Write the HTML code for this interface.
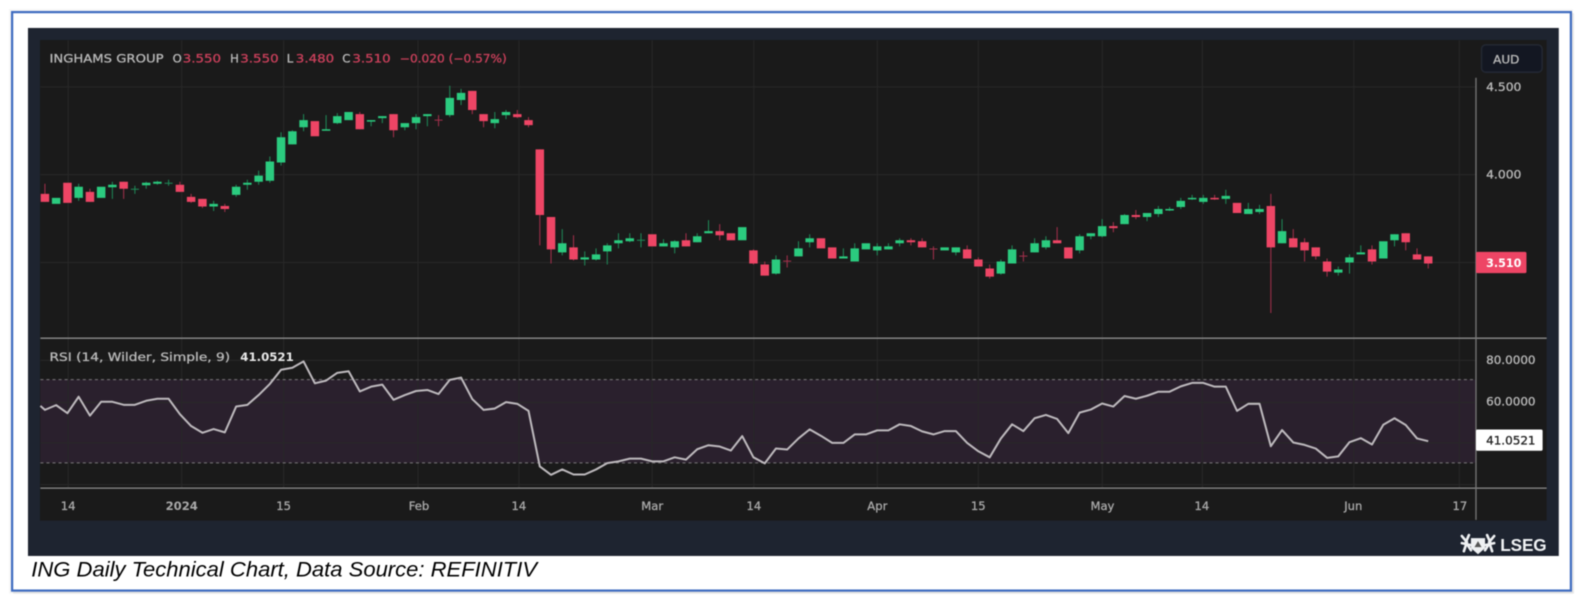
<!DOCTYPE html>
<html><head><meta charset="utf-8"><title>ING Daily Technical Chart</title>
<style>
html,body{margin:0;padding:0;background:#fff;width:1583px;height:603px;overflow:hidden}
svg{display:block;filter:blur(.45px)}
text{font-family:"DejaVu Sans","Liberation Sans",sans-serif}
.t{stroke:currentColor;stroke-width:.3px}
</style></head><body>
<svg width="1583" height="603" viewBox="0 0 1568 597.3" preserveAspectRatio="none" xmlns="http://www.w3.org/2000/svg">
<rect width="1568" height="597.3" fill="#fff"/>
<rect x="13" y="13" width="1546" height="575" fill="#bbb" opacity=".35"/>
<rect x="9" y="9" width="1549" height="579" fill="#ddd" opacity=".3"/>
<rect x="12" y="12" width="1544" height="573" fill="#fff" stroke="#3f6cc0" stroke-width="2.2"/>
<rect x="27.7" y="27.7" width="1516.3" height="523" fill="#1e2430"/>
<rect x="39.6" y="39.6" width="1492.4" height="476.1" fill="#1a1a1a"/>
<rect x="40" y="376" width="1422" height="82.5" fill="#2a202d"/>
<g fill="none" stroke="#282828" stroke-width="1">
<path d="M40 86H1462M40 173H1462M40 260H1462M40 357H1462M40 398.7H1462M40 438.7H1462M40 480H1462"/>
<path d="M67.5 40V484M180 40V484M281 40V484M414 40V484M514 40V484M646 40V484M746.7 40V484M869 40V484M969 40V484M1091.8 40V484M1191 40V484M1341 40V484M1445.5 40V484"/>
</g>
<path d="M40 376H1462M40 458.5H1462" stroke="#7c7a7c" stroke-width="1" stroke-dasharray="3 3" fill="none"/>
<path d="M40 335H1532M40 483.5H1532" stroke="#8c8c8c" stroke-width="1.3" fill="none"/>
<path d="M1462 77V515" stroke="#777" stroke-width="1.3" fill="none"/>

<g transform="translate(.5 0)">
<!-- wicks green -->
<path fill="none" stroke="#1f8a58" stroke-width="1" d="M77.4 182V199M110.8 180V197M133.1 184V192M144.3 180V187M155.4 179V183M166.5 178V184M211.1 199V209M233.4 183V195M244.5 178V188M255.7 169V183M266.8 155V181M277.9 131V164M289.1 129V143M300.2 113V130M322.5 114V129M333.6 112V123M367.1 119V125M378.2 115V122M400.5 122V129M411.6 113V128M422.8 113V125M445 85V116M456.2 88V104M489.6 111V127M500.7 109V118M556.4 227V253M578.7 249V263M589.9 246V258M601 241V262M612.1 231V246M623.3 231V240M634.4 231V245M656.7 237V244M667.8 238V251M690.1 231V240M701.3 218V231M768.1 253V272M790.4 239V254M801.5 232V245M834.9 246V256M846.1 241V259M868.4 241V253M879.5 241V247M890.6 236V244M946.3 245V253M990.9 257V272M1002 243V261M1024.3 236V250M1035.5 234V247M1068.9 232V251M1080 231V237M1091.2 217V235M1113.4 212V222M1135.7 211V219M1146.9 204V215M1158 205V209M1169.1 196V207M1180.3 193V198M1191.4 193V202M1213.7 188V202M1236 201V212M1247.1 203V212M1269.4 217V241M1325.1 264V273M1336.2 252V271M1347.4 243V252M1380.8 232V244"/>
<!-- wicks red -->
<path fill="none" stroke="#a5304c" stroke-width="1" d="M44 182V200M88.6 187V200M122 180V197M177.7 180V190M188.8 192V201M200 197V206M222.2 202V210M355.9 111V128M389.3 113V136M433.9 114V125M467.3 90V113M478.5 113V126M511.9 109V117M523 116V126M534.2 148V243M545.3 215V261M567.6 233V258M679 231V244M712.4 222V238M745.8 247V262M757 259V273M779.2 253V265M901.8 236V243M912.9 236V245M924.1 244V257M957.5 243V256M968.6 255V264M979.8 262V276M1013.2 249V259M1046.6 225V241M1102.3 220V230M1124.6 208V217M1202.6 193V198M1258.3 192V310M1280.5 227V245M1291.7 236V259M1302.8 245V257M1314 256V274M1358.5 243V262M1391.9 231V248M1403.1 246V257M1414.2 254V266"/>
<!-- doji crossbars -->
<path fill="none" stroke="#1f8a58" stroke-width="1" d="M129.1 187.5H137.1M162.5 181.5H170.5M630.4 238H638.4"/>
<path fill="none" stroke="#a5304c" stroke-width="1" d="M429.9 119H437.9M775.2 258.7H783.2M920.1 246.7H928.1M1009.2 253.7H1017.2"/>
<!-- bodies green -->
<path fill="none" stroke="#2bcb7f" stroke-width="8.4" d="M55.1 196V202M77.4 185V196M99.7 185V196M110.8 183V185.5M144.3 181V183.5M155.4 180V182M211.1 202V204.5M233.4 185V193M244.5 181V183M255.7 174V180M266.8 160V179M277.9 136V161M289.1 130V143M300.2 119V126M322.5 128V129.5M333.6 115V122M344.8 111V119M367.1 119V120.5M378.2 115V117M400.5 122V126M411.6 116V122M422.8 113V115M445 97V114M456.2 92V99M489.6 118V122M500.7 111V114M556.4 241V250M578.7 255V257M589.9 252V257M601 243V249M612.1 238V241M623.3 236V239M656.7 241V244M667.8 239V245M690.1 234V240M701.3 229V231M734.7 225V238M768.1 257V271M790.4 246V254M801.5 236V240M834.9 254V256M846.1 246V259M857.2 241V247M868.4 244V248M879.5 244V247M890.6 238V241M935.2 245V248M946.3 245V250M990.9 259V271M1002 247V261M1024.3 241V250M1035.5 238V245M1068.9 234V248M1080 231V234M1091.2 224V234M1113.4 213V222M1135.7 211V215M1146.9 207V212M1158 207V208.5M1169.1 199V205M1180.3 196V197.5M1191.4 196V200M1213.7 194V197M1236 207V212M1247.1 207V210M1269.4 229V241M1325.1 267V270M1336.2 255V260M1347.4 250V252M1369.7 239V256M1380.8 232V238"/>
<!-- bodies red -->
<path fill="none" stroke="#ee4565" stroke-width="8.4" d="M44 192V200M66.3 181V201M88.6 190V200M122 180V187M177.7 183V190M188.8 195V200M200 197V204.5M222.2 204V207M311.4 120V135M355.9 113V128M389.3 113V129M467.3 90V109M478.5 113V120M511.9 113V116M523 119V124M534.2 148V213M545.3 215V247M567.6 245V257M645.6 232V244M679 238V244M712.4 229V233M723.5 231V238M745.8 248V261M757 262V273M812.7 236V246M823.8 245V256M901.8 238V240M912.9 239V245M957.5 247V256M968.6 257V264M979.8 266V274M1046.6 238V241M1057.7 245V256M1102.3 224V226M1124.6 213V215M1202.6 196V197.5M1224.8 201V211M1258.3 204V245M1280.5 236V245M1291.7 240V248M1302.8 245V254M1314 259V269M1358.5 247V259M1391.9 231V240M1403.1 252V257M1414.2 254V261"/>

<!-- RSI -->
<polyline fill="none" stroke="#bdb9bd" stroke-width="2" stroke-linejoin="round" points="39.5,402 44,406 55.1,401.3 66.3,409.3 77.4,393 88.6,411.7 99.7,398 110.8,398 122,401 133.1,401 144.3,397 155.4,395 166.5,395 177.7,410.3 188.8,422 200,428.7 211.1,425 222.2,428.3 233.4,402.7 244.5,401 255.7,391.3 266.8,380.3 277.9,366.3 289.1,364.3 300.2,358 311.4,379.7 322.5,377 333.6,369.3 344.8,367.7 355.9,387.7 367.1,383 378.2,381 389.3,396 400.5,391.3 411.6,387.3 422.8,386.3 433.9,390.3 445,376.3 456.2,374 467.3,395.3 478.5,406 489.6,404.7 500.7,398.3 511.9,400 523,407 534.2,462 545.3,470.3 556.4,465 567.6,470 578.7,470 589.9,465 601,458.7 612.1,457 623.3,454.3 634.4,454.3 645.6,457 656.7,457 667.8,453 679,455.3 690.1,445 701.3,441 712.4,442.3 723.5,446.3 734.7,432 745.8,453 757,459 768.1,444.3 779.2,445.3 790.4,434.3 801.5,425.3 812.7,431.7 823.8,438.7 834.9,438.7 846.1,430.3 857.2,430.3 868.4,426.3 879.5,426.3 890.6,420.3 901.8,422 912.9,427.3 924.1,430.3 935.2,427 946.3,427 957.5,438.7 968.6,447 979.8,453 990.9,434.3 1002,420.3 1013.2,427 1024.3,414.3 1035.5,411 1046.6,415 1057.7,429 1068.9,408.7 1080,405.7 1091.2,399.7 1102.3,402.7 1113.4,392.3 1124.6,395 1135.7,392 1146.9,388 1158,388 1169.1,382.7 1180.3,379.3 1191.4,379.3 1202.6,383 1213.7,383 1224.8,407 1236,400 1247.1,400 1258.3,442 1269.4,426 1280.5,438.3 1291.7,440.7 1302.8,444.3 1314,453.5 1325.1,452 1336.2,438 1347.4,434 1358.5,440.3 1369.7,420.7 1380.8,414.3 1391.9,421 1403.1,434.3 1414.2,437"/>
</g>

<!-- header -->
<g font-size="11.5" fill="#b8b8b8" color="#b8b8b8">
<text class="t" x="49" y="62" textLength="113" lengthAdjust="spacingAndGlyphs">INGHAMS GROUP</text>
<text class="t" x="171" y="62">O</text><text class="t" x="228" y="62">H</text><text class="t" x="284" y="62">L</text><text class="t" x="339" y="62">C</text>
</g>
<g font-size="11.5" fill="#c9405b" color="#c9405b">
<text class="t" x="181" y="62" textLength="38" lengthAdjust="spacingAndGlyphs">3.550</text>
<text class="t" x="238" y="62" textLength="38" lengthAdjust="spacingAndGlyphs">3.550</text>
<text class="t" x="293" y="62" textLength="38" lengthAdjust="spacingAndGlyphs">3.480</text>
<text class="t" x="349" y="62" textLength="38" lengthAdjust="spacingAndGlyphs">3.510</text>
<text class="t" x="396" y="62" textLength="106" lengthAdjust="spacingAndGlyphs">−0.020 (−0.57%)</text>
</g>

<!-- AUD -->
<rect x="1467.5" y="44.5" width="60" height="27" rx="4" fill="#131722" stroke="#232833" stroke-width="1.5"/>
<text class="t" x="1479" y="63" font-size="11.5" fill="#b8b8b8" color="#b8b8b8" textLength="26" lengthAdjust="spacingAndGlyphs">AUD</text>

<!-- price axis -->
<g font-size="11.5" fill="#b8b8b8" color="#b8b8b8">
<text class="t" x="1472" y="90" textLength="35" lengthAdjust="spacingAndGlyphs">4.500</text>
<text class="t" x="1472" y="177" textLength="35" lengthAdjust="spacingAndGlyphs">4.000</text>
<text class="t" x="1472" y="360.5" textLength="49" lengthAdjust="spacingAndGlyphs">80.0000</text>
<text class="t" x="1472" y="401.5" textLength="49" lengthAdjust="spacingAndGlyphs">60.0000</text>
</g>
<rect x="1462" y="249.5" width="50" height="21" rx="1.5" fill="#ee4565"/>
<text x="1472" y="264.5" font-size="11.5" font-weight="bold" fill="#fff" textLength="35" lengthAdjust="spacingAndGlyphs">3.510</text>
<rect x="1462" y="425.5" width="66" height="21" rx="1.5" fill="#fff"/>
<text class="t" x="1472" y="440.5" font-size="11.5" fill="#222" color="#222" textLength="49" lengthAdjust="spacingAndGlyphs">41.0521</text>

<!-- RSI header -->
<text class="t" x="49" y="357.5" font-size="11.5" fill="#b8b8b8" color="#b8b8b8" textLength="179" lengthAdjust="spacingAndGlyphs">RSI (14, Wilder, Simple, 9)</text>
<text x="238" y="357.5" font-size="11.5" font-weight="bold" fill="#e8e8e8" textLength="53" lengthAdjust="spacingAndGlyphs">41.0521</text>

<!-- time axis -->
<g font-size="11.5" fill="#a8a8a8" color="#a8a8a8" text-anchor="middle">
<text class="t" x="67.5" y="505">14</text>
<text x="180" y="505" font-weight="bold">2024</text>
<text class="t" x="281" y="505">15</text>
<text class="t" x="415" y="505">Feb</text>
<text class="t" x="514" y="505">14</text>
<text class="t" x="646" y="505">Mar</text>
<text class="t" x="746.7" y="505">14</text>
<text class="t" x="869" y="505">Apr</text>
<text class="t" x="969" y="505">15</text>
<text class="t" x="1092" y="505">May</text>
<text class="t" x="1190.5" y="505">14</text>
<text class="t" x="1340.5" y="505">Jun</text>
<text class="t" x="1446" y="505">17</text>
</g>

<!-- LSEG crest -->
<g fill="none" stroke="#eef0f2" stroke-width="2.6" stroke-linecap="round">
<path d="M1448 531L1453 537L1450 546M1455 530L1452 537L1457 545M1448 538L1457 540"/>
<path d="M1480 531L1475 537L1478 546M1473 530L1476 537L1471 545M1480 538L1471 540"/>
</g>
<path d="M1457 533H1471V543L1464 549L1457 543Z" fill="#eef0f2"/>
<path d="M1464 536L1460.5 542H1467.5Z" fill="#555"/>
<text x="1486" y="546" font-size="17" font-weight="bold" fill="#f0f2f4" textLength="46" lengthAdjust="spacing" style="font-family:'Liberation Sans',sans-serif">LSEG</text>

<!-- caption -->
<text x="31" y="571" font-size="21" font-style="italic" fill="#000" textLength="501" lengthAdjust="spacingAndGlyphs" style="font-family:'Liberation Sans',sans-serif">ING Daily Technical Chart, Data Source: REFINITIV</text>
</svg>
</body></html>
